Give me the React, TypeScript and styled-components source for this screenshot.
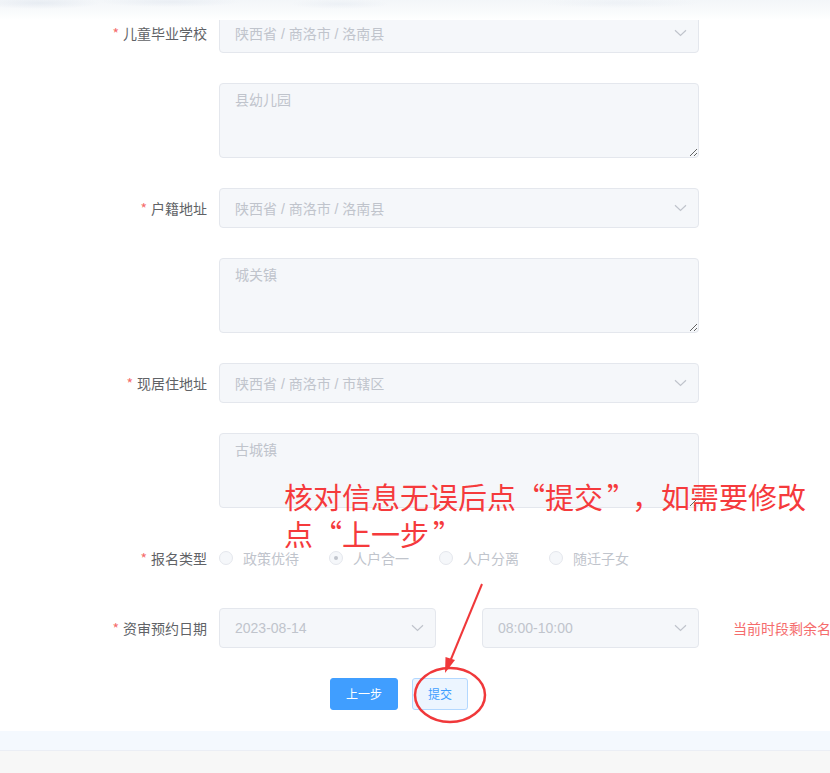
import React from "react";
import styled, { createGlobalStyle } from "styled-components";

const GlobalStyle = createGlobalStyle`
  html, body {
    margin: 0;
    padding: 0;
    background: #ffffff;
    overflow: hidden;
  }
  body {
    font-family: "Liberation Sans", "Noto Sans CJK SC", sans-serif;
    -webkit-font-smoothing: antialiased;
  }
  * { box-sizing: border-box; }
`;

const Page = styled.div`
  position: relative;
  width: 830px;
  height: 773px;
  overflow: hidden;
  background: #ffffff;
`;

const TopBand = styled.div`
  position: absolute;
  left: 0;
  top: 0;
  width: 830px;
  height: 20px;
  z-index: 3;
  background:
    radial-gradient(ellipse 60px 6px at 40px 3px, rgba(214, 222, 233, 0.45), transparent),
    radial-gradient(ellipse 70px 5px at 170px 2px, rgba(218, 225, 236, 0.4), transparent),
    radial-gradient(ellipse 50px 5px at 340px 4px, rgba(220, 227, 237, 0.35), transparent),
    radial-gradient(ellipse 80px 5px at 620px 3px, rgba(222, 229, 238, 0.3), transparent),
    linear-gradient(180deg, #f3f6f9 0%, #f9fbfc 60%, #ffffff 100%);
`;

const Form = styled.div`
  padding: 13px 0 21px 0;
`;

const FormItem = styled.div<{ $last?: boolean }>`
  display: flex;
  align-items: flex-start;
  margin-bottom: ${(p) => (p.$last ? "0" : "30px")};
`;

const Label = styled.label`
  width: 219px;
  height: 40px;
  flex: none;
  padding-right: 12px;
  text-align: right;
  font-size: 14px;
  line-height: 40px;
  color: #606266;
  font-family: "Noto Sans CJK SC", sans-serif;
  overflow: hidden;
`;

const Star = styled.span`
  color: #f56c6c;
  margin-right: 4px;
`;

const Content = styled.div`
  display: flex;
  align-items: center;
  min-height: 40px;
`;

const SelectBox = styled.div<{ $w: number }>`
  position: relative;
  width: ${(p) => p.$w}px;
  height: 40px;
  border: 1px solid #e4e7ed;
  border-radius: 4px;
  background: #f5f7fa;
  display: flex;
  align-items: center;
  padding: 0 30px 0 15px;
  font-size: 14px;
  color: #c0c4cc;
  font-family: "Liberation Sans", "Noto Sans CJK SC", sans-serif;
`;

const Arrow = styled.svg`
  position: absolute;
  right: 11px;
  top: 50%;
  margin-top: -4px;
`;

const TextArea = styled.textarea`
  width: 480px;
  height: 75px;
  border: 1px solid #e4e7ed;
  border-radius: 4px;
  background: #f5f7fa;
  padding: 5px 15px;
  font-size: 14px;
  line-height: 1.5;
  color: #c0c4cc;
  font-family: "Noto Sans CJK SC", sans-serif;
  resize: vertical;
  display: block;
  outline: none;
`;

const RadioGroup = styled.div`
  display: flex;
  align-items: center;
  height: 40px;
`;

const Radio = styled.div`
  display: flex;
  align-items: center;
  margin-right: 30px;
`;

const RadioCircle = styled.span<{ $checked?: boolean }>`
  position: relative;
  width: 14px;
  height: 14px;
  border-radius: 50%;
  border: 1px solid #e4e7ed;
  background: #f5f7fa;
  &::after {
    content: "";
    display: ${(p) => (p.$checked ? "block" : "none")};
    position: absolute;
    left: 50%;
    top: 50%;
    width: 4px;
    height: 4px;
    margin: -2px 0 0 -2px;
    border-radius: 50%;
    background: #c0c4cc;
  }
`;

const RadioText = styled.span`
  padding-left: 10px;
  font-size: 14px;
  color: #c0c4cc;
  font-family: "Noto Sans CJK SC", sans-serif;
`;

const Gap = styled.div<{ $w: number }>`
  width: ${(p) => p.$w}px;
  flex: none;
`;

const Remain = styled.span`
  font-size: 14px;
  color: #f56c6c;
  white-space: nowrap;
  font-family: "Noto Sans CJK SC", sans-serif;
`;

const ButtonRow = styled.div`
  display: flex;
  padding-left: 330px;
  gap: 14px;
`;

const Button = styled.button<{ $primary?: boolean }>`
  height: 32px;
  padding: 0 15px;
  border-radius: 3px;
  font-size: 12px;
  line-height: 1;
  font-family: "Noto Sans CJK SC", sans-serif;
  border: 1px solid ${(p) => (p.$primary ? "#409eff" : "#b3d8ff")};
  background: ${(p) => (p.$primary ? "#409eff" : "#ecf5ff")};
  color: ${(p) => (p.$primary ? "#ffffff" : "#409eff")};
  cursor: pointer;
`;

const FooterBand = styled.div`
  height: 20px;
  background: #f4f9fe;
  border-bottom: 1px solid #ebeef5;
`;

const FooterGrey = styled.div`
  height: 40px;
  background: #f7f7f7;
`;

const Note = styled.div`
  position: absolute;
  left: 284px;
  top: 478px;
  z-index: 4;
  font-size: 29px;
  line-height: 37px;
  color: #f53a3c;
  font-family: "Noto Sans CJK SC", sans-serif;
  white-space: nowrap;
`;

const Quote = styled.span<{ $open?: boolean }>`
  display: inline-block;
  width: 29px;
  text-align: ${(p) => (p.$open ? "right" : "left")};
  padding: ${(p) => (p.$open ? "0 6px 0 0" : "0 0 0 4px")};
`;

const Overlay = styled.svg`
  position: absolute;
  left: 0;
  top: 0;
  z-index: 4;
  pointer-events: none;
`;

const Chevron = () => (
  <Arrow width="13" height="8" viewBox="0 0 13 8">
    <path d="M1 1.2 L6.5 6.4 L12 1.2" fill="none" stroke="#c0c4cc" strokeWidth="1.2" />
  </Arrow>
);

const Select = ({ w, value }: { w: number; value: string }) => (
  <SelectBox $w={w}>
    {value}
    <Chevron />
  </SelectBox>
);

const ReqLabel = ({ text }: { text: string }) => (
  <Label>
    <Star>*</Star>
    {text}
  </Label>
);

const addressRows: { label: string; region: string; detail: string }[] = [
  { label: "儿童毕业学校", region: "陕西省 / 商洛市 / 洛南县", detail: "县幼儿园" },
  { label: "户籍地址", region: "陕西省 / 商洛市 / 洛南县", detail: "城关镇" },
  { label: "现居住地址", region: "陕西省 / 商洛市 / 市辖区", detail: "古城镇" },
];

const radios = [
  { text: "政策优待", checked: false },
  { text: "人户合一", checked: true },
  { text: "人户分离", checked: false },
  { text: "随迁子女", checked: false },
];

export default function App() {
  return (
    <Page>
      <GlobalStyle />
      <TopBand />
      <Form>
        {addressRows.map((r) => (
          <React.Fragment key={r.label}>
            <FormItem>
              <ReqLabel text={r.label} />
              <Content>
                <Select w={480} value={r.region} />
              </Content>
            </FormItem>
            <FormItem>
              <Label />
              <Content>
                <TextArea disabled value={r.detail} readOnly />
              </Content>
            </FormItem>
          </React.Fragment>
        ))}
        <FormItem>
          <ReqLabel text="报名类型" />
          <RadioGroup>
            {radios.map((r) => (
              <Radio key={r.text}>
                <RadioCircle $checked={r.checked} />
                <RadioText>{r.text}</RadioText>
              </Radio>
            ))}
          </RadioGroup>
        </FormItem>
        <FormItem>
          <ReqLabel text="资审预约日期" />
          <Content>
            <Select w={217} value="2023-08-14" />
            <Gap $w={46} />
            <Select w={217} value="08:00-10:00" />
            <Gap $w={34} />
            <Remain>当前时段剩余名额：0</Remain>
          </Content>
        </FormItem>
        <ButtonRow>
          <Button $primary>上一步</Button>
          <Button>提交</Button>
        </ButtonRow>
      </Form>
      <FooterBand />
      <FooterGrey />
      <Note>
        核对信息无误后点<Quote $open>“</Quote>提交<Quote>”</Quote>，如需要修改
        <br />
        点<Quote $open>“</Quote>上一步<Quote>”</Quote>
      </Note>
      <Overlay width="830" height="773" viewBox="0 0 830 773">
        <line x1="482" y1="584" x2="449" y2="664" stroke="#f0383a" strokeWidth="2" />
        <polygon points="445,673 455,660 445.5,657" fill="#f0383a" />
        <ellipse cx="450" cy="695" rx="35" ry="27" fill="none" stroke="#f0383a" strokeWidth="2.5" />
      </Overlay>
    </Page>
  );
}
